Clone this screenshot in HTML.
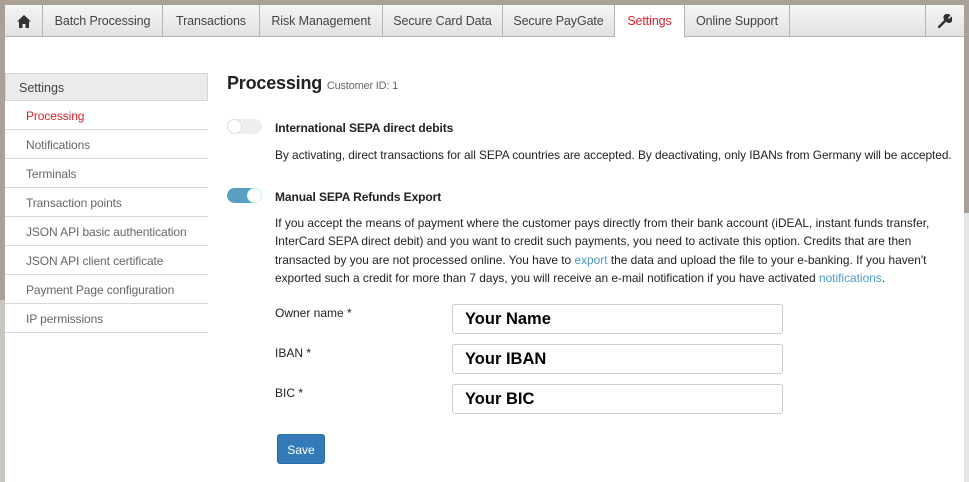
<!DOCTYPE html>
<html><head><style>
*{box-sizing:border-box;margin:0;padding:0}
body{width:969px;height:482px;overflow:hidden;background:#a9a197;font-family:"Liberation Sans",sans-serif;position:relative}
.abs{position:absolute}
.panel{left:5px;top:37px;width:959px;height:445px;background:#fff}
.rstrip{left:964px;top:213px;width:5px;height:269px;background:#e6e4e2}
.lstrip{left:0;top:300px;width:5px;height:182px;background:#c9c5c0}
.tabs{left:5px;top:5px;width:959px;height:32px;display:flex;background:linear-gradient(#f5f5f5,#e2e2e2);border-bottom:1px solid #b5b5b5}
.tab{height:32px;border-right:1px solid #b5b5b5;font-size:12.5px;color:#444;display:flex;align-items:center;justify-content:center;letter-spacing:-0.1px}
.tab.act{background:#fff;color:#d9232d;border-bottom:1px solid #fff;height:33px}
.side{left:5px;top:73px;width:203px}
.sh{height:28px;background:#ebebeb;border:1px solid #d6d6d6;font-size:12.5px;color:#444;padding:7px 0 0 13px}
.si{height:29px;border-bottom:1px solid #d9d9d9;font-size:12px;color:#666;padding:8px 0 0 21px;letter-spacing:-0.1px}
.si.act{color:#d9232d}
h1{position:absolute;left:227px;top:73px;font-size:18px;color:#222;font-weight:bold;letter-spacing:-0.2px}
h1 span{font-size:11px;color:#666;font-weight:normal}
.tg{width:35px;height:15px;border-radius:8px}
.knob{width:15px;height:15px;border-radius:50%;background:#fff;border:1px solid #ddd;position:absolute;top:0}
.b{font-size:12px;font-weight:bold;color:#222;letter-spacing:-0.1px}
.p{font-size:11.9px;color:#222;line-height:18.3px}
.p a{color:#4a9bc1;text-decoration:none}
.lab{font-size:12px;color:#222}
.inp{left:452px;width:331px;height:30px;border:1px solid #ccc;border-radius:3px;font-size:16.5px;font-weight:bold;color:#000;padding:5px 0 0 12px}
.btn{left:277px;top:434px;width:48px;height:30px;background:#337ab7;border:1px solid #2e6da4;border-radius:3px;color:#fff;font-size:12px;text-align:center;padding-top:8px}
</style></head><body>
<div class="abs panel"></div>
<div class="abs rstrip"></div>
<div class="abs lstrip"></div>
<div class="abs tabs">
<div class="tab" style="width:38px"><svg width="14" height="13" viewBox="0 0 14 13"><path d="M7 0L0 6.5h2V13h3.5V9h3v4H12V6.5h2z" fill="#333"/></svg></div>
<div class="tab" style="width:120px">Batch Processing</div>
<div class="tab" style="width:97px">Transactions</div>
<div class="tab" style="width:123px">Risk Management</div>
<div class="tab" style="width:120px">Secure Card Data</div>
<div class="tab" style="width:112px">Secure PayGate</div>
<div class="tab act" style="width:70px">Settings</div>
<div class="tab" style="width:105px">Online Support</div>
<div class="tab" style="width:136px"></div>
<div class="tab" style="width:38px;border-right:none"><svg width="14" height="14" viewBox="0 0 14 14"><path d="M1 13L7 7" stroke="#333" stroke-width="2.5" stroke-linecap="round"/><path d="M6 5.5A3.5 3.5 0 0 1 12.5 1.5L10 4l1 1 2.5-2.5A3.5 3.5 0 0 1 8.5 8z" fill="#333"/></svg></div>
</div>
<div class="abs side">
<div class="sh">Settings</div>
<div class="si act">Processing</div>
<div class="si">Notifications</div>
<div class="si">Terminals</div>
<div class="si">Transaction points</div>
<div class="si">JSON API basic authentication</div>
<div class="si">JSON API client certificate</div>
<div class="si">Payment Page configuration</div>
<div class="si">IP permissions</div>
</div>
<h1>Processing <span>Customer ID: 1</span></h1>
<div class="abs tg" style="left:227px;top:119px;background:#eee"><div class="knob" style="left:0"></div></div>
<div class="abs b" style="left:275px;top:121px">International SEPA direct debits</div>
<div class="abs p" style="left:275px;top:146px;white-space:nowrap;letter-spacing:-0.05px">By activating, direct transactions for all SEPA countries are accepted. By deactivating, only IBANs from Germany will be accepted.</div>
<div class="abs tg" style="left:227px;top:188px;background:#5b9fc0"><div class="knob" style="left:20px;border-color:#cfe"></div></div>
<div class="abs b" style="left:275px;top:190px">Manual SEPA Refunds Export</div>
<div class="abs p" style="left:275px;top:214px;width:690px">If you accept the means of payment where the customer pays directly from their bank account (iDEAL, instant funds transfer, InterCard SEPA direct debit) and you want to credit such payments, you need to activate this option. Credits that are then transacted by you are not processed online. You have to <a>export</a> the data and upload the file to your e-banking. If you haven't exported such a credit for more than 7 days, you will receive an e-mail notification if you have activated <a>notifications</a>.</div>
<div class="abs lab" style="left:275px;top:306px">Owner name *</div>
<div class="abs lab" style="left:275px;top:346px">IBAN *</div>
<div class="abs lab" style="left:275px;top:386px">BIC *</div>
<div class="abs inp" style="top:304px">Your Name</div>
<div class="abs inp" style="top:344px">Your IBAN</div>
<div class="abs inp" style="top:384px">Your BIC</div>
<div class="abs btn">Save</div>
</body></html>
